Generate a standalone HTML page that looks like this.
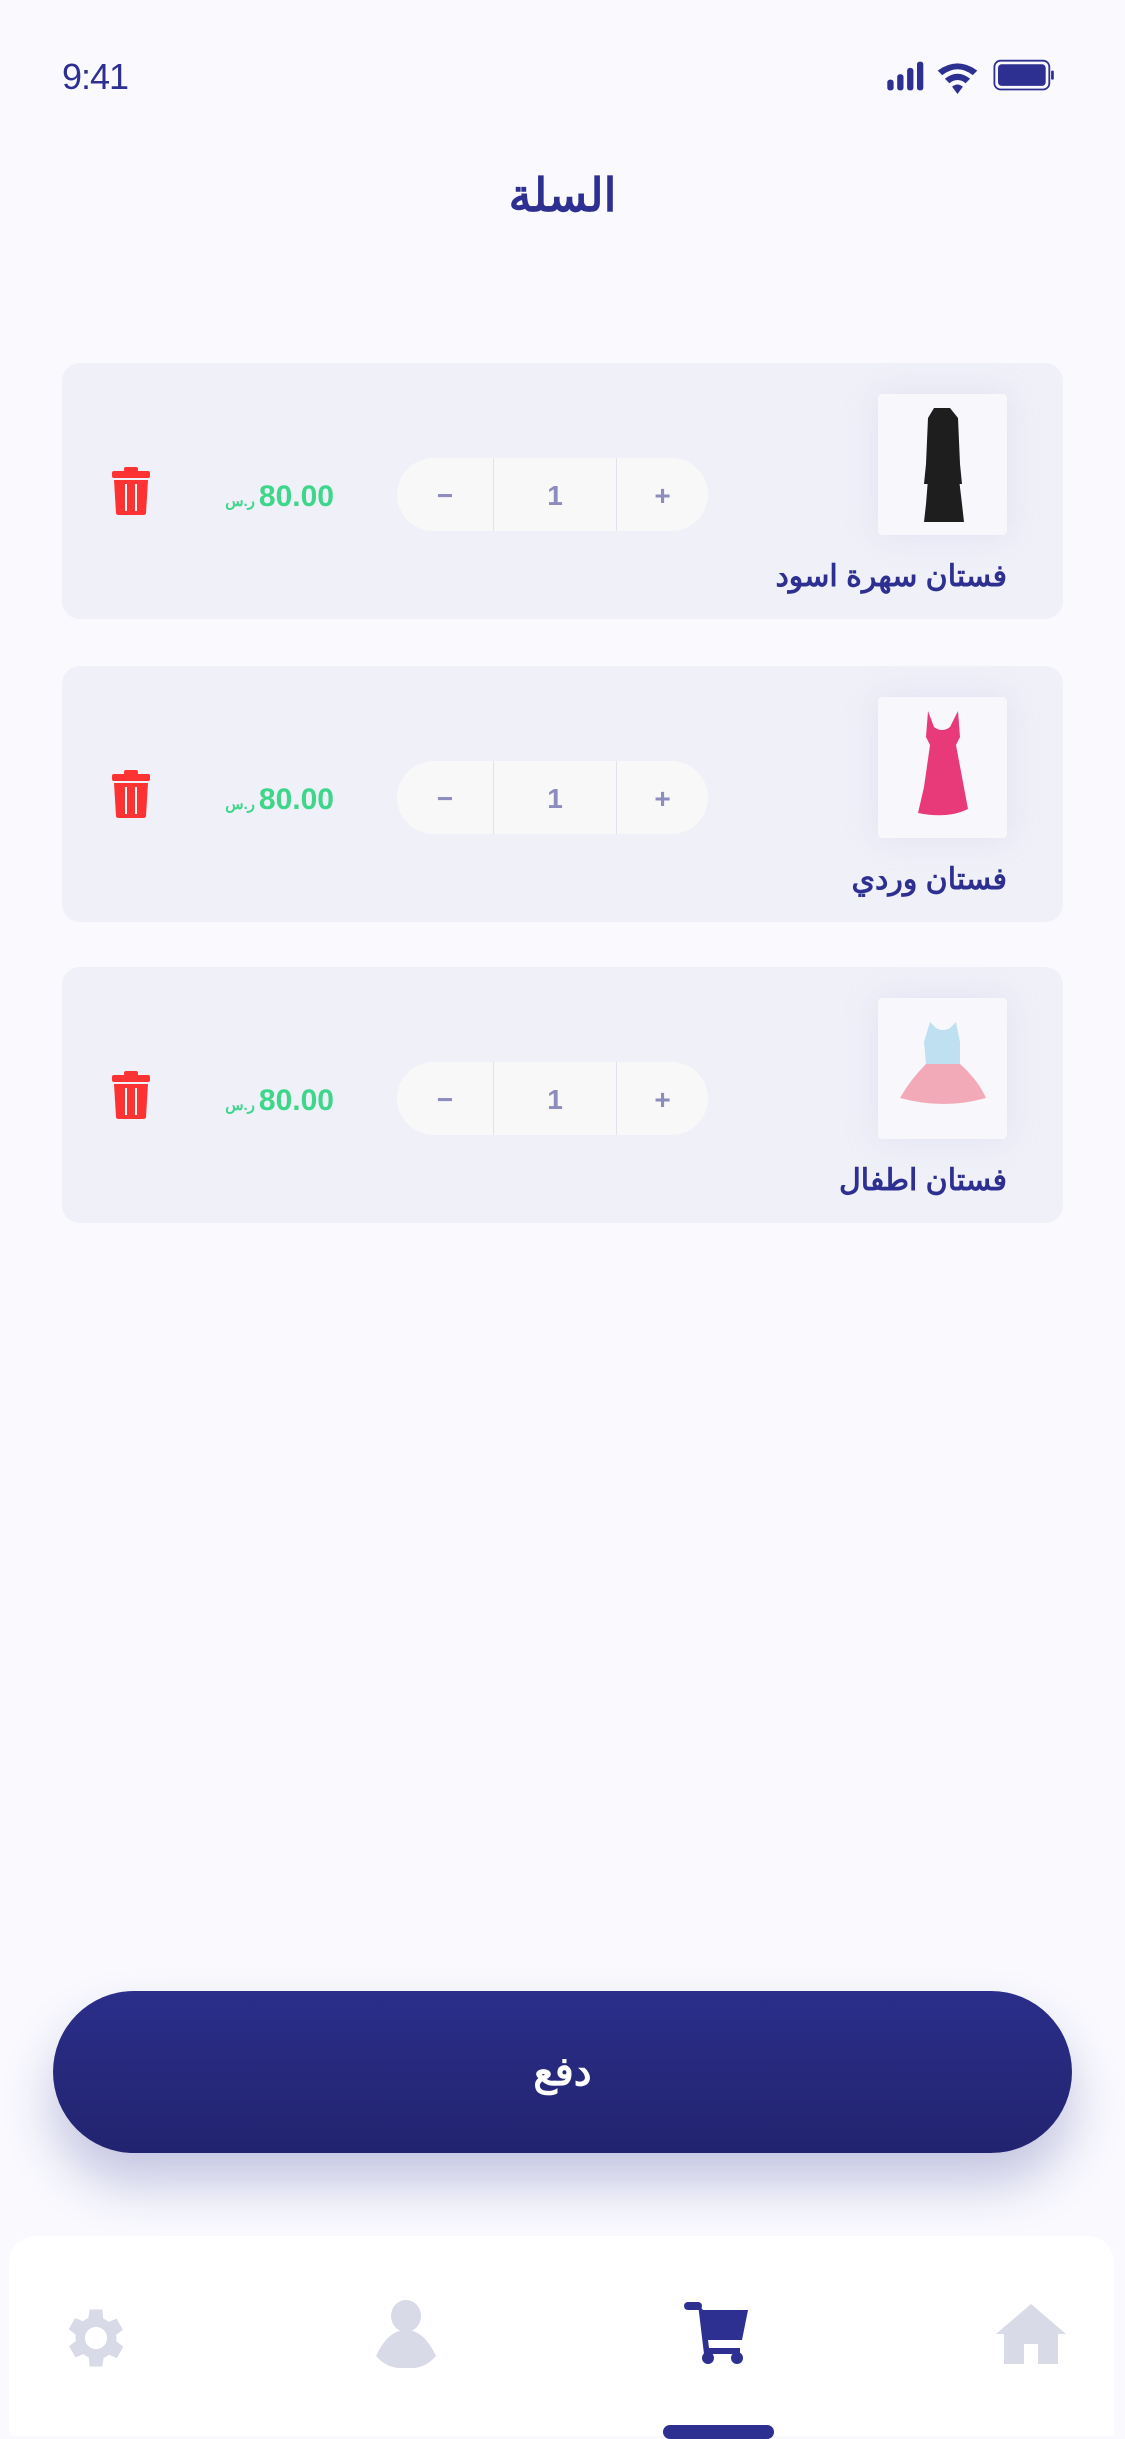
<!DOCTYPE html>
<html><head><meta charset="utf-8"><style>
*{margin:0;padding:0;box-sizing:border-box}
body{width:1125px;height:2436px;background:#f9f9fe;position:relative;overflow:hidden;font-family:"Liberation Sans","Noto Sans CJK SC",sans-serif}
.abs{position:absolute}
.time{left:62px;top:56px;font-size:36px;color:#2d3091;letter-spacing:-1px}
.title{left:0;width:1125px;top:168px;text-align:center;font-size:46px;font-weight:bold;color:#2d3091}
.card{position:absolute;left:62px;width:1001px;height:256px;background:#eff0f8;border-radius:18px}
.img{position:absolute;left:816px;top:31px;width:129px;height:141px;background:#f8f8fc;border-radius:4px;box-shadow:0 0 30px rgba(200,200,230,.35)}
.name{position:absolute;right:56px;top:196px;font-size:30px;font-weight:bold;color:#2d3091;direction:rtl;white-space:nowrap}
.step{position:absolute;left:335px;top:95px;width:311px;height:73px;background:#f8f8f8;border-radius:37px}
.step div{position:absolute;top:0;height:73px;line-height:75px;text-align:center;color:#8c8cbd;font-weight:bold;font-size:28px}
.price{position:absolute;left:60px;width:212px;text-align:right;top:117px;font-size:30px;font-weight:bold;color:#3dd68a;white-space:nowrap;direction:ltr}
.price small{display:inline-block;font-size:15px;margin-right:4px}
.trash{position:absolute;left:50px;top:104px}
.pay{left:53px;top:1991px;width:1019px;height:162px;border-radius:81px;background:linear-gradient(#2b2e8a,#22236f);box-shadow:0 30px 50px rgba(40,45,140,.25);color:#fff;font-size:40px;font-weight:bold;text-align:center;line-height:162px}
.nav{left:9px;top:2236px;width:1105px;height:200px;background:#fff;border-radius:26px 26px 0 0}
</style></head><body>
<div class="abs time">9:41</div>
<svg class="abs" style="left:876px;top:58px" width="190" height="36" viewBox="0 0 190 40">
<rect x="2" y="24" width="7" height="12" rx="3" fill="#2d3091"/><rect x="13" y="18" width="7" height="18" rx="3" fill="#2d3091"/><rect x="24" y="11" width="7" height="25" rx="3" fill="#2d3091"/><rect x="35" y="4" width="7" height="32" rx="3" fill="#2d3091"/>
<path d="M58 14 Q80 -2 102 14 L97 19 Q80 6 63 19Z M66 23 Q80 12 94 23 L89 28 Q80 21 71 28Z M74 32 L80 40 L86 32 Q80 27 74 32Z" fill="#2d3091"/>
<rect x="121" y="3" width="61" height="32" rx="7" fill="none" stroke="#2d3091" stroke-width="2"/><rect x="125" y="7" width="53" height="24" rx="4" fill="#2d3091"/><rect x="184" y="14" width="3" height="10" rx="1" fill="#2d3091"/>
</svg>
<div class="abs title">السلة</div>

<div class="card" style="top:363px">
 <div class="img"><svg width="129" height="141" viewBox="0 0 129 141"><path d="M56 14 L72 14 L80 24 L82 70 L84 90 L80 90 L78 60 L84 110 L86 128 L46 128 L48 110 L52 60 L50 90 L46 90 L48 70 L50 24Z" fill="#1e1e1e"/></svg></div>
 <div class="name">فستان سهرة اسود</div>
 <div class="step"><div style="left:0;width:96px">−</div><div style="left:96px;width:1px;background:#e2e2ea"></div><div style="left:97px;width:122px">1</div><div style="left:219px;width:1px;background:#e2e2ea"></div><div style="left:220px;width:91px">+</div></div>
 <div class="price"><small>ر.س</small>80.00</div>
 <svg class="trash" width="38" height="48" viewBox="0 0 38 48"><rect x="12" y="0" width="14" height="5" rx="2" fill="#fd3333"/><rect x="0" y="4" width="38" height="7" rx="2" fill="#fd3333"/><path d="M2 13 H36 L34 46 Q34 48 31 48 H7 Q4 48 4 46Z" fill="#fd3333"/><rect x="13" y="17" width="2" height="27" fill="#fff"/><rect x="23" y="17" width="2" height="27" fill="#fff"/></svg>
</div>

<div class="card" style="top:666px">
 <div class="img"><svg width="129" height="141" viewBox="0 0 129 141"><path d="M50 14 L56 30 Q64 36 72 30 L80 14 L82 40 L78 48 L90 112 Q70 122 40 116 L46 90 L52 48 L48 40Z" fill="#e83a78"/></svg></div>
 <div class="name">فستان وردي</div>
 <div class="step"><div style="left:0;width:96px">−</div><div style="left:96px;width:1px;background:#e2e2ea"></div><div style="left:97px;width:122px">1</div><div style="left:219px;width:1px;background:#e2e2ea"></div><div style="left:220px;width:91px">+</div></div>
 <div class="price"><small>ر.س</small>80.00</div>
 <svg class="trash" width="38" height="48" viewBox="0 0 38 48"><rect x="12" y="0" width="14" height="5" rx="2" fill="#fd3333"/><rect x="0" y="4" width="38" height="7" rx="2" fill="#fd3333"/><path d="M2 13 H36 L34 46 Q34 48 31 48 H7 Q4 48 4 46Z" fill="#fd3333"/><rect x="13" y="17" width="2" height="27" fill="#fff"/><rect x="23" y="17" width="2" height="27" fill="#fff"/></svg>
</div>

<div class="card" style="top:967px">
 <div class="img"><svg width="129" height="141" viewBox="0 0 129 141"><path d="M52 24 L58 30 Q65 34 72 30 L78 24 L82 44 L82 66 L48 66 L46 44Z" fill="#bfe0f0"/><path d="M48 66 L82 66 Q100 82 108 100 Q66 112 22 100 Q32 82 48 66Z" fill="#f3aab8"/></svg></div>
 <div class="name">فستان اطفال</div>
 <div class="step"><div style="left:0;width:96px">−</div><div style="left:96px;width:1px;background:#e2e2ea"></div><div style="left:97px;width:122px">1</div><div style="left:219px;width:1px;background:#e2e2ea"></div><div style="left:220px;width:91px">+</div></div>
 <div class="price"><small>ر.س</small>80.00</div>
 <svg class="trash" width="38" height="48" viewBox="0 0 38 48"><rect x="12" y="0" width="14" height="5" rx="2" fill="#fd3333"/><rect x="0" y="4" width="38" height="7" rx="2" fill="#fd3333"/><path d="M2 13 H36 L34 46 Q34 48 31 48 H7 Q4 48 4 46Z" fill="#fd3333"/><rect x="13" y="17" width="2" height="27" fill="#fff"/><rect x="23" y="17" width="2" height="27" fill="#fff"/></svg>
</div>

<div class="abs pay">دفع</div>

<div class="abs nav"></div>
<svg class="abs" style="left:58px;top:2300px" width="76" height="76" viewBox="0 0 24 24"><path fill="#d9dae8" d="M19.4 13a7.5 7.5 0 000-2l2.1-1.6-2-3.5-2.5 1a7 7 0 00-1.7-1L15 3h-4l-.4 2.7a7 7 0 00-1.7 1l-2.5-1-2 3.5L6.6 11a7.5 7.5 0 000 2l-2.1 1.6 2 3.5 2.5-1a7 7 0 001.7 1L11 21h4l.4-2.7a7 7 0 001.7-1l2.5 1 2-3.5zM13 15.5A3.5 3.5 0 1113 8.5a3.5 3.5 0 010 7z" transform="translate(-1 0)"/></svg>
<svg class="abs" style="left:376px;top:2300px" width="60" height="68" viewBox="0 0 60 68"><ellipse cx="30" cy="16" rx="15" ry="16" fill="#d9dae8"/><path d="M0 56 Q12 30 30 30 Q48 30 60 56 Q48 70 30 68 Q12 70 0 56Z" fill="#d9dae8"/></svg>
<svg class="abs" style="left:684px;top:2302px" width="68" height="62" viewBox="0 0 68 62"><rect x="0" y="0" width="18" height="8" rx="4" fill="#2d3091"/><path d="M14 2 L20 52 L56 52 L56 46 L25 46 L24 38 L58 38 L64 8 L19 8Z" fill="#2d3091"/><ellipse cx="24" cy="56" rx="6" ry="6" fill="#2d3091"/><ellipse cx="53" cy="56" rx="6" ry="6" fill="#2d3091"/></svg>
<svg class="abs" style="left:996px;top:2304px" width="70" height="60" viewBox="0 0 70 60"><path d="M35 0 L70 30 L62 30 L62 60 L42 60 L42 40 L28 40 L28 60 L8 60 L8 30 L0 30Z" fill="#d9dae8"/></svg>
<div class="abs" style="left:663px;top:2425px;width:111px;height:14px;border-radius:7px;background:#2d3091"></div>
</body></html>
